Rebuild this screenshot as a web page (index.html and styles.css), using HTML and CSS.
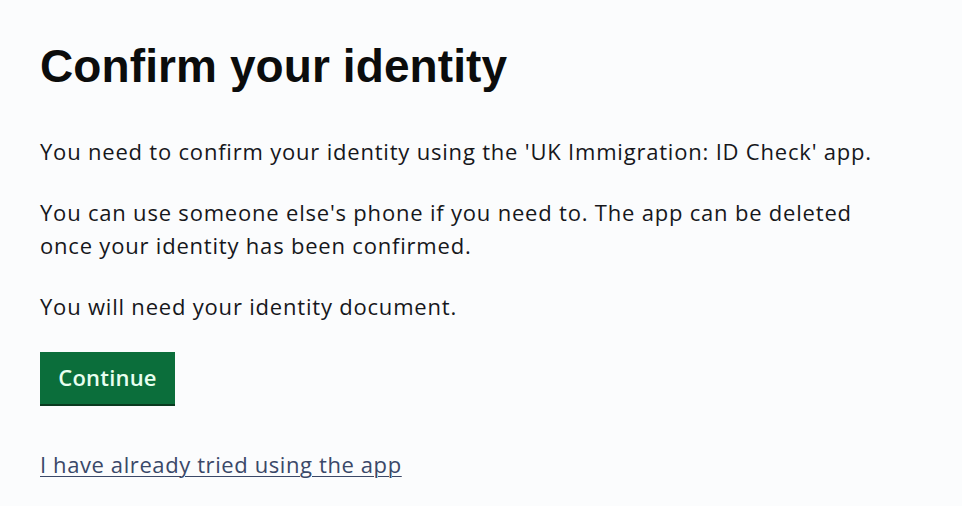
FILE: index.html
```html
<!DOCTYPE html>
<html lang="en">
<head>
<meta charset="utf-8">
<title>Confirm your identity</title>
<link rel="stylesheet" href="styles.css">
</head>
<body>
<main class="page">
  <h1 class="title">Confirm your identity</h1>
  <p class="body">You need to confirm your identity using the 'UK Immigration: ID Check' app.</p>
  <p class="body">You can use someone else's phone if you need to. The app can be deleted<br>once your identity has been confirmed.</p>
  <p class="body">You will need your identity document.</p>
  <button class="btn" type="button">Continue</button>
  <a class="link" href="#">I have already tried using the app</a>
</main>
</body>
</html>
```
FILE: styles.css
```css
html, body {
  margin: 0;
  padding: 0;
  background: #fbfcfd;
}
.page {
  padding: 36px 40px 0 40px;
  font-family: "Open Sans", "Liberation Sans", sans-serif;
  color: #0b0c0c;
  display: flex;
  flex-direction: column;
  align-items: flex-start;
}
.title {
  margin: 0 0 39px 0;
  font-family: "Liberation Sans", Arial, sans-serif;
  font-size: 46px;
  line-height: 60px;
  font-weight: 700;
  letter-spacing: 0.1px;
}
.body {
  margin: 0 0 28px 0;
  font-size: 22px;
  line-height: 33px;
  color: #16171b;
  letter-spacing: 0.8px;
}
.btn {
  margin: 1px 0 0 0;
  width: 135px;
  height: 52px;
  border: 0;
  border-radius: 0;
  background: #0b6e3b;
  box-shadow: 0 2px 0 #0a3a20;
  color: #e8fff0;
  font-family: "Open Sans", "Liberation Sans", sans-serif;
  font-size: 22px;
  font-weight: 600;
  letter-spacing: 0.2px;
  padding: 0 0 2px 0;
}
.link {
  margin-top: 45px;
  font-size: 22px;
  line-height: 30px;
  color: #3a4868;
  text-decoration: underline;
  text-underline-offset: 3px;
  text-decoration-thickness: 1px;
  letter-spacing: 0.6px;
}
```
